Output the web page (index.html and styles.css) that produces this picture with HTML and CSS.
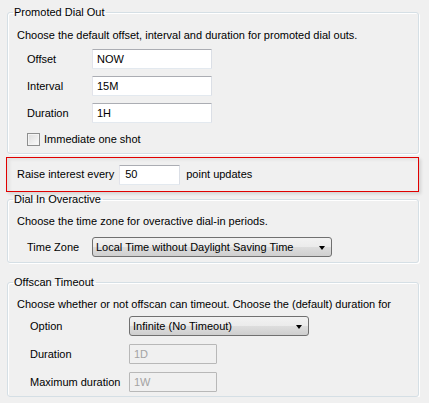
FILE: index.html
```html
<!DOCTYPE html>
<html>
<head>
<meta charset="utf-8">
<link rel="stylesheet" href="styles.css">
</head>
<body>
<div class="page">
  <fieldset class="group g1">
    <legend>Promoted Dial Out</legend>
    <p class="desc">Choose the default offset, interval and duration for promoted dial outs.</p>
    <div class="rows rows1">
      <div class="row"><span class="lbl">Offset</span><span class="text w120">NOW</span></div>
      <div class="row"><span class="lbl">Interval</span><span class="text w120">15M</span></div>
      <div class="row"><span class="lbl">Duration</span><span class="text w120">1H</span></div>
      <div class="check"><span class="box"></span><span>Immediate one shot</span></div>
    </div>
  </fieldset>

  <div class="highlight">
    <span>Raise interest every</span><span class="text w61">50</span><span>point updates</span>
  </div>

  <fieldset class="group g2">
    <legend>Dial In Overactive</legend>
    <p class="desc">Choose the time zone for overactive dial-in periods.</p>
    <div class="rows rows2">
      <div class="row"><span class="lbl">Time Zone</span><span class="combo w240">Local Time without Daylight Saving Time<span class="arrow"></span></span></div>
    </div>
  </fieldset>

  <fieldset class="group g3">
    <legend>Offscan Timeout</legend>
    <p class="desc">Choose whether or not offscan can timeout. Choose the (default) duration for</p>
    <div class="rows rows3">
      <div class="row"><span class="lbl wide">Option</span><span class="combo w180">Infinite (No Timeout)<span class="arrow"></span></span></div>
      <div class="row"><span class="lbl wide">Duration</span><span class="text disabled w88">1D</span></div>
      <div class="row"><span class="lbl wide">Maximum duration</span><span class="text disabled w88">1W</span></div>
    </div>
  </fieldset>
</div>
</body>
</html>
```

FILE: styles.css
```css
html, body {
  margin: 0;
  padding: 0;
  background: #f0f0f0;
}
body {
  font-family: "Liberation Sans", Arial, sans-serif;
  font-size: 11px;
  line-height: 13px;
  color: #000;
}
.page {
  width: 412px;
  padding: 6px 0 0 7px;
}
.group {
  margin: 0;
  min-width: 0;
  border: 1px solid #d5dfe5;
  border-radius: 3px;
  box-shadow: inset 1px 1px 0 #fff, 1px 1px 0 #fff;
  padding: 10px 9px 7px 9px;
}
.group legend {
  padding: 0 2px 0 1px;
  margin-left: -4px;
  line-height: 13px;
  color: #000;
}
.desc {
  margin: 0;
  white-space: nowrap;
}
.rows {
  display: flex;
  flex-direction: column;
}
.rows1 { margin-top: 7px; padding-left: 10px; gap: 7px; }
.rows2 { margin-top: 9px; padding-left: 10px; }
.rows3 { margin-top: 5px; padding-left: 13px; gap: 8px; }
.g2 { margin-top: 1px; padding-top: 9px; padding-bottom: 5px; }
.g3 { margin-top: 13px; padding-top: 9px; padding-bottom: 4px; }
.row {
  display: flex;
  align-items: center;
  height: 20px;
}
.lbl {
  width: 65px;
  flex: none;
}
.lbl.wide { width: 99px; }
.text {
  box-sizing: border-box;
  height: 20px;
  display: flex;
  align-items: center;
  padding-left: 4px;
  background: #fff;
  border: 1px solid;
  border-color: #abadb3 #dbdfe6 #e3e9ef #e2e3ea;
  border-radius: 1px;
}
.text.disabled {
  background: #f0f0f0;
  border-color: #b8b8b8;
  color: #a3a3a3;
}
.w120 { width: 120px; }
.w61 { width: 61px; }
.w88 { width: 88px; }
.w240 { width: 240px; }
.w180 { width: 180px; }
.check {
  display: flex;
  align-items: center;
  gap: 4px;
  height: 13px;
  margin-top: 3px;
}
.box {
  box-sizing: border-box;
  width: 13px;
  height: 13px;
  border: 1px solid #8e8f8f;
  background: linear-gradient(135deg, #dcdcdc, #fbfbfb);
  box-shadow: inset 0 0 0 1px #f4f4f4;
}
.highlight {
  box-sizing: border-box;
  width: 413px;
  height: 35px;
  margin: 3px 0 0 -1px;
  border: 1px solid #e00000;
  display: flex;
  align-items: center;
  gap: 6px;
  padding-left: 10px;
  box-shadow: 2px 2px 3px rgba(0,0,0,0.12), inset 3px 2px 3px rgba(0,0,0,0.06);
}
.highlight .text { padding-left: 5px; margin-left: -1px; }
.combo {
  position: relative;
  box-sizing: border-box;
  height: 20px;
  display: flex;
  align-items: center;
  padding-left: 3px;
  border: 1px solid #707070;
  border-radius: 3px;
  background: linear-gradient(#f2f2f2 0%, #ebebeb 50%, #dddddd 51%, #cfcfcf 100%);
  white-space: nowrap;
}
.arrow {
  position: absolute;
  right: 6px;
  top: 8px;
  width: 0;
  height: 0;
  border-left: 3.5px solid transparent;
  border-right: 3.5px solid transparent;
  border-top: 4px solid #000;
}
```
